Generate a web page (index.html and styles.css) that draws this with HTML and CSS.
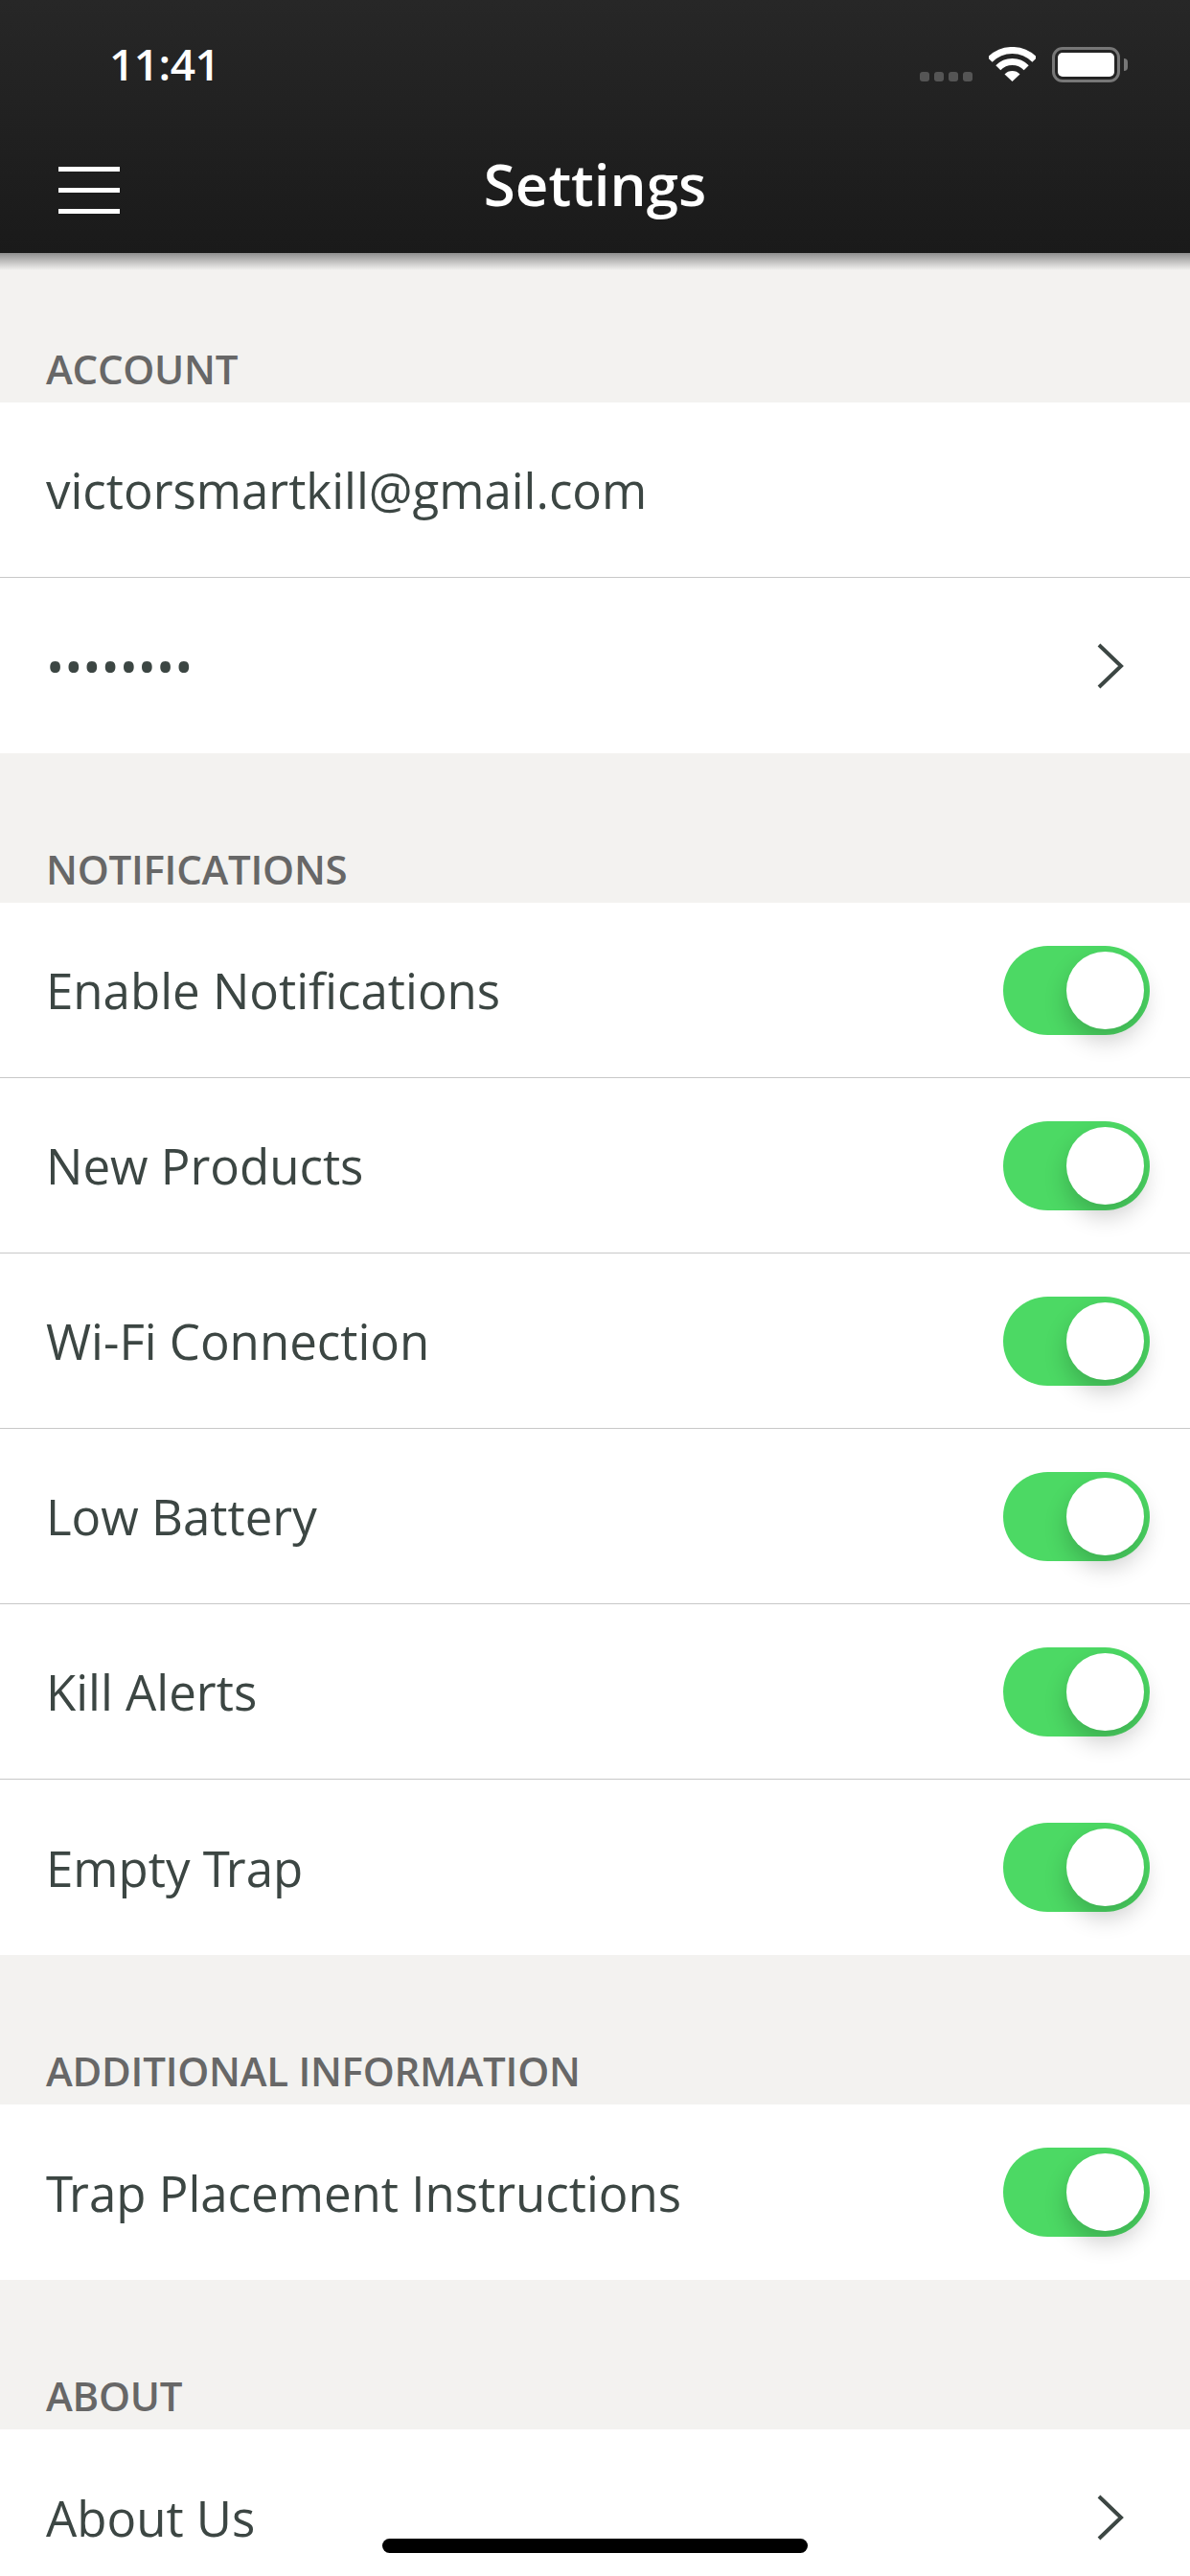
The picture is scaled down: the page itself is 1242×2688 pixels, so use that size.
FILE: index.html
```html
<!DOCTYPE html>
<html lang="en">
<head>
    <meta charset="UTF-8">
    <meta name="viewport" content="width=device-width, initial-scale=1.0">
    <title>Settings</title>
    <link rel="stylesheet" href="styles.css">
</head>
<body>
    <div class="screen">
        <header class="top-bar">
            <div class="status-bar">
                <span class="time">11:41</span>
                <div class="status-icons">
                    <div class="signal"><i></i><i></i><i></i><i></i></div>
                    <svg class="wifi" width="49" height="36" viewBox="0 0 49 36">
                        <path d="M1.1 13.4A32.5 32.5 0 0 1 47.9 13.4" fill="none" stroke="#fff" stroke-width="7"/>
                        <path d="M9.8 21.8A20.5 20.5 0 0 1 39.2 21.8" fill="none" stroke="#fff" stroke-width="7"/>
                        <path d="M24.5 36L16.5 28.4A11 11 0 0 1 32.5 28.4Z" fill="#fff"/>
                    </svg>
                    <div class="battery"><div class="battery-level"></div></div>
                    <div class="battery-cap"></div>
                </div>
            </div>
            <div class="nav-bar">
                <div class="hamburger"><span></span><span></span><span></span></div>
                <h1>Settings</h1>
            </div>
        </header>
        <div class="top-shadow"></div>

        <h2 class="section-label first">ACCOUNT</h2>
        <ul class="group">
            <li class="row">victorsmartkill@gmail.com</li>
            <li class="row">••••••••
                <svg class="chevron" width="28" height="48" viewBox="0 0 28 48"><path d="M2 2L25 24L2 46" fill="none" stroke="#3c4643" stroke-width="4"/></svg>
            </li>
        </ul>

        <h2 class="section-label">NOTIFICATIONS</h2>
        <ul class="group">
            <li class="row">Enable Notifications <span class="toggle"></span></li>
            <li class="row">New Products <span class="toggle"></span></li>
            <li class="row">Wi-Fi Connection <span class="toggle"></span></li>
            <li class="row">Low Battery <span class="toggle"></span></li>
            <li class="row">Kill Alerts <span class="toggle"></span></li>
            <li class="row"><span>Empty <span class="kern-t">T</span>rap</span> <span class="toggle"></span></li>
        </ul>

        <h2 class="section-label">ADDITIONAL INFORMATION</h2>
        <ul class="group">
            <li class="row"><span><span class="kern-t">T</span>rap Placement Instructions</span> <span class="toggle"></span></li>
        </ul>

        <h2 class="section-label">ABOUT</h2>
        <ul class="group">
            <li class="row">About Us
                <svg class="chevron" width="28" height="48" viewBox="0 0 28 48"><path d="M2 2L25 24L2 46" fill="none" stroke="#3c4643" stroke-width="4"/></svg>
            </li>
        </ul>

        <div class="home-bar"></div>
    </div>
</body>
</html>
```

FILE: styles.css
```css
html, body {
    margin: 0;
    padding: 0;
}
body {
    font-family: "Open Sans", sans-serif;
    background-color: #f3f2f0;
}
.screen {
    position: relative;
    width: 1242px;
    height: 2688px;
    overflow: hidden;
}
.top-bar {
    height: 264px;
    background: linear-gradient(#272727, #1a1a1a);
    color: #fff;
}
.top-shadow {
    height: 18px;
    background: linear-gradient(#8f8f8f, #f3f2f0);
}
.status-bar {
    display: flex;
    justify-content: space-between;
    height: 132px;
    box-sizing: border-box;
    padding: 49px 65px 0 114px;
}
.time {
    font-size: 46px;
    font-weight: 600;
    line-height: 34px;
    letter-spacing: -0.5px;
}
.status-icons {
    display: flex;
    align-items: flex-start;
}
.signal {
    display: flex;
    gap: 5px;
    margin: 26px 17px 0 0;
}
.signal i {
    width: 10px;
    height: 10px;
    border-radius: 3px;
    background-color: #555;
}
.battery {
    width: 71px;
    height: 37px;
    box-sizing: border-box;
    margin-left: 17px;
    padding: 3px;
    border: 3px solid #777;
    border-radius: 11px;
}
.battery-level {
    height: 100%;
    background-color: #fff;
    border-radius: 5px;
}
.battery-cap {
    width: 4px;
    height: 13px;
    margin: 12px 0 0 4px;
    background-color: #777;
    border-radius: 0 4px 4px 0;
}
.nav-bar {
    display: grid;
    grid-template-columns: 1fr auto 1fr;
    align-items: center;
    height: 132px;
    padding: 0 61px;
    box-sizing: border-box;
}
.nav-bar h1 {
    margin: -12px 0 0;
    font-size: 60px;
    font-weight: 600;
    line-height: 82px;
}
.hamburger {
    display: flex;
    flex-direction: column;
    gap: 17px;
    width: 64px;
}
.hamburger span {
    height: 5px;
    background-color: #fff;
}
.section-label {
    margin: 0;
    padding: 0 48px 7px;
    height: 156px;
    box-sizing: border-box;
    display: flex;
    align-items: flex-end;
    font-size: 42px;
    font-weight: 600;
    line-height: 57px;
    letter-spacing: -0.25px;
    color: #676767;
}
.section-label.first {
    height: 138px;
}
.group {
    list-style: none;
    margin: 0;
    padding: 0;
    background-color: #fff;
}
.row {
    display: flex;
    justify-content: space-between;
    align-items: center;
    height: 183px;
    box-sizing: border-box;
    padding: 0 42px 0 48px;
    font-size: 51px;
    color: #3c4643;
    border-bottom: 1px solid #c8c8c8;
}
.row:last-child {
    border-bottom: none;
}
.kern-t {
    letter-spacing: -4px;
}
.chevron {
    margin-right: 27px;
}
.toggle {
    position: relative;
    width: 153px;
    height: 93px;
    border-radius: 47px;
    background-color: #4cd964;
}
.toggle::after {
    content: "";
    position: absolute;
    top: 6px;
    right: 6px;
    width: 81px;
    height: 81px;
    border-radius: 50%;
    background-color: #fff;
    box-shadow: 0 12px 24px rgba(0, 0, 0, 0.2);
}
.home-bar {
    position: absolute;
    left: 399px;
    top: 2649px;
    width: 444px;
    height: 15px;
    border-radius: 8px;
    background-color: #000;
}
```
